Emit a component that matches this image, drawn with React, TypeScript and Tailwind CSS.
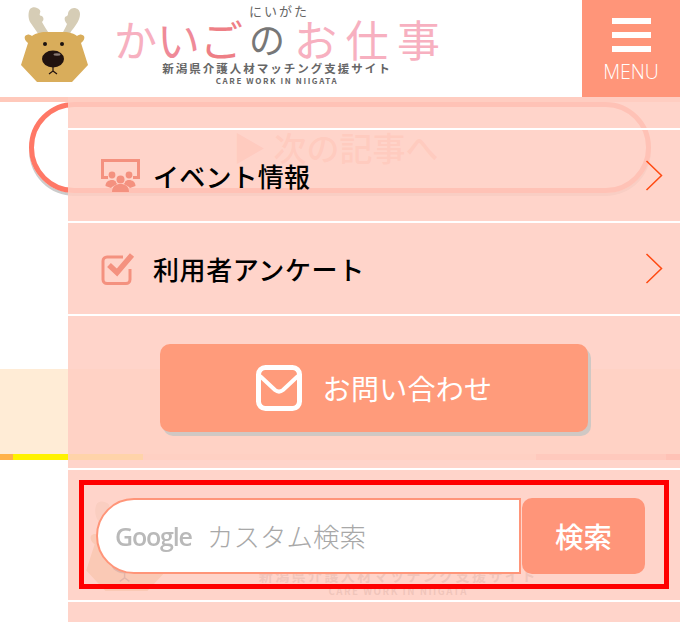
const jp = "font-['Noto_Sans_CJK_JP','Noto_Sans',sans-serif]";

function Deer({ scale = 1 }: { scale?: number }) {
  return (
    <svg width={69 * scale} height={78 * scale} viewBox="0 0 69 78" className="block">
      <path d="M19 28 10 15C8 11 8 5 10 2c2-2 5-2 7-1 3 1 4 3 3 5-1 2 0 3 2 3 2 2 2 4 0 6 2 4 5 8 8 13z" fill="#d6cdb6" />
      <path d="M42 28c1-4 4-8 5-11-2-2-3-5-2-7 1-1 3-1 3-3 0-3 3-6 6-6s6 2 6 6c0 6-4 11-7 15-2 2-3 4-3 6z" fill="#d6cdb6" />
      <path d="M5 29c2-2 4-2 7 0 2-2 9-4 13-4h19c5 0 11 2 13 4 3-2 5-2 7 0 1 2 0 5-3 7l7 22-16 17H17L1 58l7-22c-3-2-4-5-3-7z" fill="#d9ad5b" />
      <circle cx="25" cy="37" r="2" fill="#1c1210" />
      <circle cx="42" cy="37" r="2" fill="#1c1210" />
      <ellipse cx="33" cy="52" rx="11" ry="8.500" fill="#21120f" />
      <ellipse cx="37" cy="47.500" rx="3.500" ry="1.200" fill="#8a7a75" />
      <path d="M33 60v4l-4 3M33 64l4 3" stroke="#21120f" strokeWidth="1.200" fill="none" />
    </svg>
  );
}

function Chevron() {
  return (
    <svg width="18" height="31" viewBox="0 0 18 31" className="block">
      <path d="M1.500 1l15 14.500L1.500 30" fill="none" stroke="#ff4a12" strokeWidth="1.500" />
    </svg>
  );
}

function EventIcon() {
  return (
    <svg width="40" height="33" viewBox="0 0 40 33" className="block">
      <path d="M1.500 20V1.500h36V20" fill="none" stroke="#f4917f" strokeWidth="3" />
      <path d="M0 18.500h7M32 18.500h7" stroke="#f4917f" strokeWidth="3" />
      <g fill="#f4917f">
        <circle cx="11" cy="16" r="3.400" />
        <circle cx="28" cy="16" r="3.400" />
        <circle cx="19.500" cy="20.500" r="4" />
        <path d="M11 33c0-6 4-8 8.500-8s8.500 2 8.500 8z" />
        <path d="M4.500 27c0-4 3-6 6.500-6 1.500 0 2.500.5 3.500 1 .5 1.500 1 2.500 2 3-2 1-5 2-6.500 4z" />
        <path d="M34.500 27c0-4-3-6-6.500-6-1.500 0-2.500.5-3.500 1-.5 1.500-1 2.500-2 3 2 1 5 2 6.500 4z" />
      </g>
    </svg>
  );
}

function CheckIcon() {
  return (
    <svg width="36" height="34" viewBox="0 0 36 34" className="block">
      <path d="M29 17v10.500a4 4 0 0 1-4 4H6a4 4 0 0 1-4-4V9a4 4 0 0 1 4-4h16" fill="none" stroke="#f4917f" strokeWidth="3" />
      <path d="M8 13l8 7.500L31 3" fill="none" stroke="#f4917f" strokeWidth="5.500" />
    </svg>
  );
}

function MailIcon() {
  return (
    <svg width="46" height="46" viewBox="0 0 46 46" className="block">
      <rect x="2.500" y="2.500" width="41" height="41" rx="7" fill="none" stroke="#fff" strokeWidth="5" />
      <path d="M4 11l15 14c2.500 2 5.500 2 8 0l15-14" fill="none" stroke="#fff" strokeWidth="4" />
    </svg>
  );
}

function Row({ icon, label, track }: { icon: React.ReactNode; label: string; track: string }) {
  return (
    <div className="flex h-[93px] items-center border-b-2 border-white pr-[17px]">
      <div className="flex w-[85px] justify-start pl-[33px]">{icon}</div>
      <span className={`${jp} flex-1 text-[26px] leading-none font-medium ${track} text-black`}>{label}</span>
      <Chevron />
    </div>
  );
}

export default function App() {
  return (
    <div className="relative h-[622px] w-[680px] overflow-hidden bg-white">
      <header className="flex h-[97px] bg-white">
        <div className="ml-[20px] mt-[7px] shrink-0">
          <Deer />
        </div>
        <div className={`${jp} ml-[23px] flex w-[330px] flex-col items-center`}>
          <div className="mt-[4px] h-[14px] pl-[4px] text-[13px] leading-[14px] tracking-[2px] text-[#666]">にいがた</div>
          <div className="flex h-[40px] items-center self-start whitespace-nowrap pl-[2px] text-[43px] leading-[40px]">
            <span className="text-[#f7b0c0]">か</span>
            <span className="text-[#ef8a98]">い</span>
            <span className="text-[#ee7f86]">ご</span>
            <span className="ml-[6px] text-[36px] text-[#777]">の</span>
            <span className="ml-[9px] tracking-[8.500px] text-[#f7b0c0]">お仕事</span>
          </div>
          <div className="mt-[4px] text-[11.500px] leading-[13px] font-bold tracking-[2px] text-[#666]">新潟県介護人材マッチング支援サイト</div>
          <div className="text-[8px] leading-[11px] font-bold tracking-[1.600px] text-[#666]">CARE WORK IN NIIGATA</div>
        </div>
        <div className="ml-auto flex w-[98px] flex-col items-center bg-[#ff9579]">
          <div className="mt-[18px] flex w-[39px] flex-col gap-[8px]">
            <div className="h-[6px] bg-white" />
            <div className="h-[6px] bg-white" />
            <div className="h-[6px] bg-white" />
          </div>
          <div className="mt-[8px] font-['Open_Sans',sans-serif] text-[19.500px] leading-[24px] font-light text-white">MENU</div>
        </div>
      </header>
      <div className="h-[5px] bg-[#ffc9bb]" />
      <div className={`${jp} ml-[29px] flex h-[91px] w-[622px] items-center rounded-full border-[5px] border-[#ff7866] pl-[199px] text-[33px] font-medium text-[#ffb6a6] shadow-[0_3px_0_#ccc]`}>
        ▶ 次の記事へ
      </div>
      <div className="mt-[176px] h-[85px] bg-[#ffecd6]" />
      <div className="flex h-[6px]">
        <div className="w-[13px] bg-[#ffb24a]" />
        <div className="w-[130px] bg-[#fff200]" />
        <div className="w-[393px] bg-[#ffdcc8]" />
        <div className="w-[130px] bg-[#ffa99a]" />
        <div className="flex-1 bg-[#ff7866]" />
      </div>
      <div className="ml-[85px] mt-[41px] flex">
        <Deer scale={1.2} />
        <div className={`${jp} ml-[91px] flex flex-col items-center pt-[66px]`}>
          <div className="text-[14px] leading-[16px] font-bold tracking-[2.400px] text-[#888]">新潟県介護人材マッチング支援サイト</div>
          <div className="mt-[1px] text-[9.700px] leading-[14px] font-bold tracking-[1.500px] text-[#888]">CARE WORK IN NIIGATA</div>
        </div>
      </div>

      <nav className="absolute top-[97px] right-0 bottom-0 left-[68px] bg-[rgba(255,206,194,0.87)]">
        <div className="h-[33px] border-b-2 border-white" />
        <Row icon={<EventIcon />} label="イベント情報" track="tracking-[0.2px]" />
        <Row icon={<CheckIcon />} label="利用者アンケート" track="tracking-[0.6px]" />
        <div className="flex h-[154px] flex-col items-center border-b-2 border-white pt-[28px]">
          <div className="flex h-[88px] w-[428px] items-center justify-center gap-[21px] rounded-[10px] bg-[#ff9b7b] shadow-[3px_4px_0_#d0c8c4]">
            <MailIcon />
            <span className={`${jp} text-[28px] leading-none tracking-[0.3px] text-white`}>お問い合わせ</span>
          </div>
        </div>
        <div className="flex h-[132px] border-b-2 border-white pt-[10px] pl-[11px]">
          <div className="flex h-[109px] w-[590px] border-[5px] border-[#ff0000] pt-[13px] pl-[12px]">
            <div className="flex h-[76px] w-[425px] items-center rounded-l-[38px] border-2 border-[#ff9579] bg-white pl-[17px]">
              <span className="w-[92px] font-['Open_Sans',sans-serif] text-[25px] leading-none font-semibold tracking-[-1.200px] text-[#b9b9b9] blur-[0.6px]">Google</span>
              <span className={`${jp} text-[26.500px] leading-none font-light text-[#a8a8a8]`}>カスタム検索</span>
            </div>
            <div className={`${jp} ml-[1px] flex h-[76px] w-[123px] items-center justify-center rounded-[10px] bg-[#ff9579] text-[28.500px] font-medium text-white`}>検索</div>
          </div>
        </div>
      </nav>
    </div>
  );
}
